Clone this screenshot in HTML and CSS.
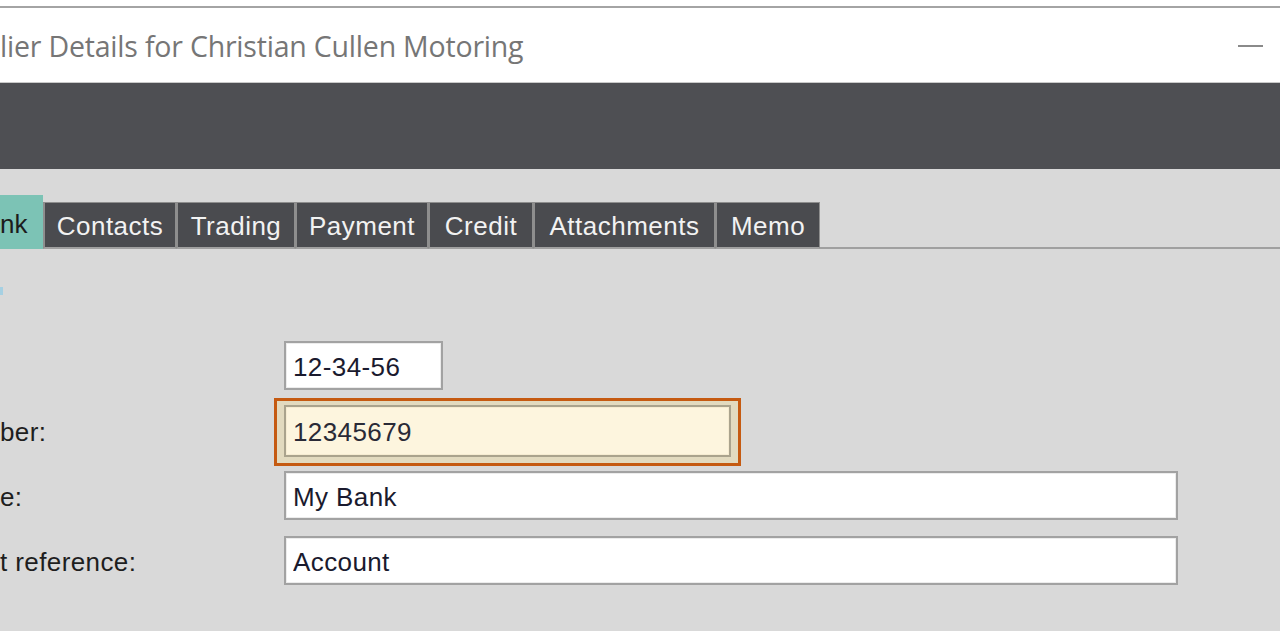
FILE: index.html
```html
<!DOCTYPE html>
<html lang="en">
<head>
<meta charset="utf-8">
<title>Supplier Details</title>
<link rel="stylesheet" href="styles.css">
</head>
<body>
<div class="window">
  <header class="titlebar">
    <h1 class="title">lier Details for Christian Cullen Motoring</h1>
    <span class="minimize" aria-label="Minimize"></span>
  </header>
  <div class="toolbar"></div>
  <main class="content">
    <nav class="tabs">
      <span class="tab active">nk</span>
      <span class="tab w133">Contacts</span>
      <span class="tab w119">Trading</span>
      <span class="tab w133">Payment</span>
      <span class="tab w105">Credit</span>
      <span class="tab w182">Attachments</span>
      <span class="tab w105">Memo</span>
      <span class="tab-rest"></span>
    </nav>
    <div class="section-head"><span class="section-mark"></span></div>
    <form class="form">
      <label class="label"></label>
      <div class="field"><input class="input short" value="12-34-56"></div>
      <label class="label">ber:</label>
      <div class="field">
        <div class="highlight"><input class="input medium focus" value="12345679"></div>
      </div>
      <label class="label">e:</label>
      <div class="field"><input class="input wide" value="My Bank"></div>
      <label class="label">t reference:</label>
      <div class="field"><input class="input wide" value="Account"></div>
    </form>
  </main>
</div>
</body>
</html>
```

FILE: styles.css
```css
* { box-sizing: border-box; }
html, body { margin: 0; padding: 0; }
body {
  width: 1280px;
  height: 631px;
  overflow: hidden;
  background: #ffffff;
  font-family: "Liberation Sans", Arial, sans-serif;
}
.window {
  margin-top: 6px;
  border-top: 2px solid #a4a4a4;
}
.titlebar {
  height: 75px;
  background: #ffffff;
  display: flex;
  align-items: center;
  justify-content: space-between;
  padding: 2px 17px 0 0;
  border-bottom: 1px solid #c9c9c9;
}
.title {
  margin: 0;
  font-family: "Open Sans", "Noto Sans", sans-serif;
  font-weight: 400;
  font-size: 28.5px;
  letter-spacing: -0.2px;
  color: #767676;
}
.minimize {
  width: 25px;
  height: 2px;
  background: #8a8a8a;
}
.toolbar {
  height: 86px;
  background: #4e4f53;
}
.content {
  background: #d9d9d9;
  height: 470px;
  padding-top: 26px;
}
.tabs {
  display: flex;
  align-items: flex-end;
  height: 54px;
}
.tab {
  height: 47px;
  display: flex;
  align-items: center;
  justify-content: center;
  padding: 2px 0 0 0;
  background: #4a4b4f;
  color: #f2f2f2;
  font-size: 26px;
  letter-spacing: 0.5px;
  border: 1px solid #8e8e8e;
  border-bottom: 2px solid #a0a0a0;
}
.tab + .tab { border-left: 2px solid #8e8e8e; }
.w105 { width: 105px; }
.w119 { width: 119px; }
.w133 { width: 133px; }
.w182 { width: 182px; }
.tab.active {
  height: 54px;
  width: 43px;
  padding: 4px 0 0 0;
  background: #7cc3b5;
  color: #1c1c1c;
  border: none;
  letter-spacing: 0;
  justify-content: flex-start;
}
.tab-rest {
  flex: 1;
  height: 2px;
  background: #a0a0a0;
}
.section-head {
  height: 92px;
  padding-top: 38px;
}
.section-mark {
  display: block;
  width: 3px;
  height: 8px;
  background: #a6d0e2;
}
.form {
  display: grid;
  grid-template-columns: 284px auto;
  grid-auto-rows: 49px;
  row-gap: 16px;
  align-items: center;
}
.label {
  padding-top: 3px;
  font-size: 26px;
  letter-spacing: 0.4px;
  color: #1e1e1e;
}
.field {
  display: flex;
}
.input {
  height: 49px;
  border: 2px solid #a2a2a2;
  box-shadow: inset 0 0 0 1px #ececec;
  background: #ffffff;
  padding: 3px 7px 0 7px;
  font-family: "Liberation Sans", Arial, sans-serif;
  font-size: 26px;
  letter-spacing: 0.4px;
  color: #1a1a2e;
  outline: none;
}
.input.short { width: 159px; }
.input.medium { width: 447px; }
.input.wide { width: 894px; }
.highlight {
  margin: -8px -10px -11px -10px;
  padding: 4px 7px 6px 7px;
  border: 3px solid #c55a11;
  background: #e2dabf;
}
.input.focus {
  height: 52px;
  background: #fdf5de;
  border-color: #aaa38d;
  box-shadow: inset 0 0 0 1px #f6ecd2;
  color: #2a2a36;
}
```
